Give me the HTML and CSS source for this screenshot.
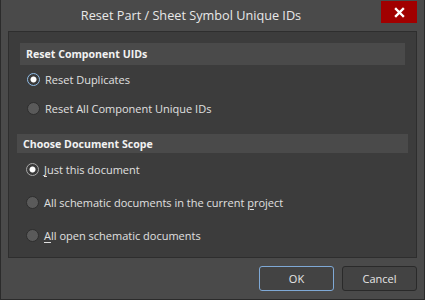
FILE: index.html
```html
<!DOCTYPE html>
<html>
<head>
<meta charset="utf-8">
<link rel="stylesheet" href="styles.css">
</head>
<body>
<div class="window">
  <div class="titlebar">
    <div class="title">Reset Part / Sheet Symbol Unique IDs</div>
    <div class="close">
      <svg width="11" height="11" viewBox="0 0 11 11"><path d="M2 2 L9 9 M9 2 L2 9" stroke="#ffffff" stroke-width="2.4" stroke-linecap="square"/></svg>
    </div>
  </div>
  <div class="panel">
    <div class="section s1">
      <div class="header">Reset Component UIDs</div>
      <div class="row"><span class="radio sel focus"></span><span class="label">Reset Duplicates</span></div>
      <div class="row"><span class="radio"></span><span class="label">Reset All Component Unique IDs</span></div>
    </div>
    <div class="section s2">
      <div class="header">Choose Document Scope</div>
      <div class="row"><span class="radio sel"></span><span class="label"><u>J</u>ust this document</span></div>
      <div class="row"><span class="radio"></span><span class="label">All schematic documents in the current <u>p</u>roject</span></div>
      <div class="row"><span class="radio"></span><span class="label"><u>A</u>ll open schematic documents</span></div>
    </div>
  </div>
  <div class="buttons">
    <div class="btn ok">OK</div>
    <div class="btn">Cancel</div>
  </div>
</div>
</body>
</html>
```
FILE: styles.css
```css
html, body {
  margin: 0;
  padding: 0;
  background: #4a4a4a;
}
.window {
  width: 425px;
  height: 300px;
  box-sizing: border-box;
  background: #4a4a4a;
  border: 1px solid #2b2b2b;
  border-top: none;
  font-family: "Open Sans", "Noto Sans", sans-serif;
  font-size: 11px;
  color: #e0e0e0;
  display: flex;
  flex-direction: column;
}
.titlebar {
  height: 31px;
  display: flex;
  align-items: flex-start;
}
.title {
  flex: 1;
  text-align: center;
  font-size: 12.7px;
  line-height: 30px;
  color: #e8e8e8;
}
.close {
  width: 36px;
  height: 22px;
  margin-top: 1px;
  margin-right: 7px;
  background: #a10000;
  display: flex;
  align-items: center;
  justify-content: center;
}
.panel {
  margin: 0 7px;
  height: 227px;
  box-sizing: border-box;
  background: #3c3c3c;
  border: 1px solid #2e2e2e;
  padding-top: 11px;
}
.header {
  background: #4a4a4a;
  font-weight: bold;
  font-size: 10.6px;
  color: #f2f2f2;
  display: flex;
  align-items: center;
  padding-left: 6px;
}
.s1 {
  margin: 0 11px;
}
.s1 .header {
  height: 22px;
}
.s1 .row {
  height: 29px;
  padding-left: 7px;
}
.s2 {
  margin: 11px 8px 0;
}
.s2 .header {
  height: 19px;
}
.s2 .row {
  height: 33px;
  padding-left: 9px;
}
.row {
  display: flex;
  align-items: center;
}
.radio {
  width: 13px;
  height: 13px;
  box-sizing: border-box;
  border-radius: 50%;
  background: #5a5a5a;
  border: 1px solid #2e2e2e;
  margin-right: 5px;
  flex: none;
}
.radio.sel {
  background: radial-gradient(circle, #ffffff 0, #ffffff 2.6px, #3a3a3a 3.4px);
  border: 1px solid #a8a8a8;
}
.radio.sel.focus {
  border-color: #8fbbe6;
}
.label u {
  text-decoration-thickness: 1px;
  text-underline-offset: 2px;
}
.buttons {
  display: flex;
  justify-content: flex-end;
  gap: 8px;
  margin: 8px 7px 0 0;
}
.btn {
  width: 75px;
  height: 25px;
  box-sizing: border-box;
  border: 1px solid #2a2a2a;
  border-radius: 3px;
  background: #434343;
  display: flex;
  align-items: center;
  justify-content: center;
  color: #e6e6e6;
}
.btn.ok {
  border-color: #7fa9d6;
}
```
